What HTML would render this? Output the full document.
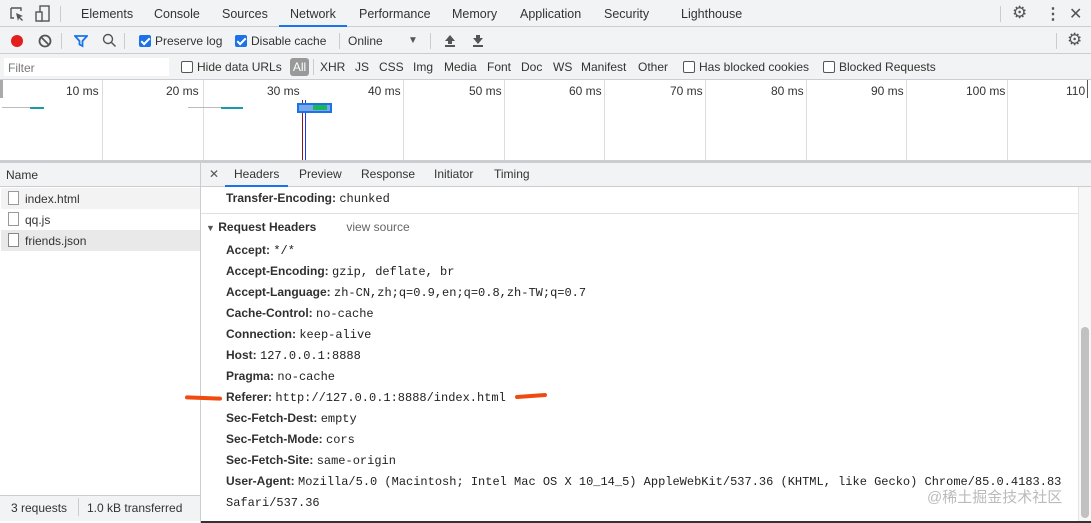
<!DOCTYPE html>
<html><head><style>
*{margin:0;padding:0;box-sizing:border-box}
body{width:1091px;height:523px;overflow:hidden;background:#fff;font-family:"Liberation Sans",sans-serif;font-size:12px;color:#333;position:relative}
.a{position:absolute;white-space:nowrap}
.mono{font-family:"Liberation Mono",monospace;font-size:12px;color:#222}
b{font-weight:bold;color:#303030}
.cb{display:inline-block;width:12px;height:12px;border-radius:2px;vertical-align:-2px;margin-right:4px}
.on{background:#1a73e8;position:relative}
.on:after{content:"";position:absolute;left:4px;top:1px;width:3px;height:7px;border:solid #fff;border-width:0 2px 2px 0;transform:rotate(45deg)}
.off{border:1px solid #555;background:#fff}
.vl{position:absolute;width:1px;background:#ccc}
.rows div{height:21px;line-height:21px}
</style></head><body>
<!-- tab bar -->
<div class="a" style="left:0;top:0;width:1091px;height:27px;background:#f1f3f4;border-bottom:1px solid #cbcdd1"></div>
<svg class="a" style="left:9px;top:6px" width="16" height="16"><path d="M2 2h10v3M2 2v10h3" fill="none" stroke="#555" stroke-width="1.4"/><path d="M7 7l7 3-3 1 3 3-1 1-3-3-1 3z" fill="#555"/></svg>
<svg class="a" style="left:35px;top:5px" width="16" height="18"><rect x="5" y="1" width="9" height="15" fill="none" stroke="#555" stroke-width="1.4"/><rect x="1" y="7" width="6" height="9" fill="#f1f3f4" stroke="#555" stroke-width="1.4"/></svg>
<div class="vl" style="left:60px;top:6px;height:16px"></div>
<div class="a" style="left:81px;top:7px;font-size:12.5px">Elements</div>
<div class="a" style="left:154px;top:7px;font-size:12.5px">Console</div>
<div class="a" style="left:222px;top:7px;font-size:12.5px">Sources</div>
<div class="a" style="left:290px;top:7px;font-size:12.5px">Network</div>
<div class="a" style="left:279px;top:25px;width:68px;height:2px;background:#1a73e8"></div>
<div class="a" style="left:359px;top:7px;font-size:12.5px">Performance</div>
<div class="a" style="left:452px;top:7px;font-size:12.5px">Memory</div>
<div class="a" style="left:520px;top:7px;font-size:12.5px">Application</div>
<div class="a" style="left:604px;top:7px;font-size:12.5px">Security</div>
<div class="a" style="left:681px;top:7px;font-size:12.5px">Lighthouse</div>
<div class="vl" style="left:1000px;top:6px;height:16px"></div>
<div class="a" style="left:1012px;top:3px;font-size:17px;color:#555">⚙</div>
<div class="a" style="left:1045px;top:4px;font-size:16px;color:#555;font-weight:bold">⋮</div>
<div class="a" style="left:1069px;top:4px;font-size:16px;color:#555">✕</div>
<!-- toolbar -->
<div class="a" style="left:0;top:27px;width:1091px;height:27px;background:#f1f3f4;border-bottom:1px solid #cbcdd1"></div>
<div class="a" style="left:11px;top:35px;width:12px;height:12px;border-radius:50%;background:#e41d1d"></div>
<svg class="a" style="left:38px;top:34px" width="14" height="14"><circle cx="7" cy="7" r="5.5" fill="none" stroke="#555" stroke-width="1.8"/><path d="M3 3l8 8" stroke="#555" stroke-width="1.8"/></svg>
<div class="vl" style="left:61px;top:33px;height:16px"></div>
<svg class="a" style="left:74px;top:34px" width="14" height="14"><path d="M1 2h12l-4.5 5v5l-3-1.5V7z" fill="none" stroke="#1a73e8" stroke-width="1.8"/></svg>
<svg class="a" style="left:102px;top:33px" width="15" height="15"><circle cx="6" cy="6" r="4.5" fill="none" stroke="#555" stroke-width="1.4"/><path d="M9.5 9.5l4 4" stroke="#555" stroke-width="1.5"/></svg>
<div class="vl" style="left:124px;top:33px;height:16px"></div>
<div class="a" style="left:139px;top:34px"><span class="cb on"></span>Preserve log</div>
<div class="a" style="left:235px;top:34px"><span class="cb on"></span>Disable cache</div>
<div class="vl" style="left:339px;top:33px;height:16px"></div>
<div class="a" style="left:348px;top:34px">Online</div>
<div class="a" style="left:408px;top:35px;font-size:10px;color:#555">▼</div>
<div class="vl" style="left:430px;top:33px;height:16px"></div>
<svg class="a" style="left:444px;top:34px" width="12" height="13"><path d="M6 1L1 7h3v3h4V7h3z" fill="#555"/><rect x="1" y="11" width="10" height="2" fill="#555"/></svg>
<svg class="a" style="left:472px;top:34px" width="12" height="13"><path d="M6 10L1 4h3V1h4v3h3z" fill="#555"/><rect x="1" y="11" width="10" height="2" fill="#555"/></svg>
<div class="vl" style="left:1056px;top:33px;height:16px"></div>
<div class="a" style="left:1067px;top:30px;font-size:17px;color:#555">⚙</div>
<!-- filter -->
<div class="a" style="left:0;top:54px;width:1091px;height:26px;background:#f1f3f4;border-bottom:1px solid #cbcdd1"></div>
<div class="a" style="left:4px;top:58px;width:165px;height:18px;background:#fff"></div>
<div class="a" style="left:8px;top:61px;color:#777">Filter</div>
<div class="a" style="left:181px;top:60px"><span class="cb off"></span>Hide data URLs</div>
<div class="a" style="left:290px;top:58px;width:19px;height:18px;background:#999;border-radius:3px;color:#fff;text-align:center;line-height:18px">All</div>
<div class="vl" style="left:313px;top:59px;height:16px"></div>
<div class="a" style="left:320px;top:60px">XHR</div>
<div class="a" style="left:355px;top:60px">JS</div>
<div class="a" style="left:379px;top:60px">CSS</div>
<div class="a" style="left:413px;top:60px">Img</div>
<div class="a" style="left:444px;top:60px">Media</div>
<div class="a" style="left:487px;top:60px">Font</div>
<div class="a" style="left:521px;top:60px">Doc</div>
<div class="a" style="left:553px;top:60px">WS</div>
<div class="a" style="left:581px;top:60px">Manifest</div>
<div class="a" style="left:638px;top:60px">Other</div>
<div class="a" style="left:683px;top:60px"><span class="cb off"></span>Has blocked cookies</div>
<div class="a" style="left:823px;top:60px"><span class="cb off"></span>Blocked Requests</div>
<!-- timeline -->
<div class="a" style="left:0;top:80px;width:3px;height:18px;background:#aaa"></div>
<div class="vl" style="left:102px;top:80px;height:80px;background:#ddd"></div>
<div class="vl" style="left:203px;top:80px;height:80px;background:#ddd"></div>
<div class="vl" style="left:403px;top:80px;height:80px;background:#ddd"></div>
<div class="vl" style="left:504px;top:80px;height:80px;background:#ddd"></div>
<div class="vl" style="left:604px;top:80px;height:80px;background:#ddd"></div>
<div class="vl" style="left:705px;top:80px;height:80px;background:#ddd"></div>
<div class="vl" style="left:806px;top:80px;height:80px;background:#ddd"></div>
<div class="vl" style="left:906px;top:80px;height:80px;background:#ddd"></div>
<div class="vl" style="left:1007px;top:80px;height:80px;background:#ddd"></div>
<div class="vl" style="left:1087px;top:80px;height:18px;background:#555"></div>
<div class="a" style="left:66px;top:84px">10 ms</div>
<div class="a" style="left:166px;top:84px">20 ms</div>
<div class="a" style="left:267px;top:84px">30 ms</div>
<div class="a" style="left:368px;top:84px">40 ms</div>
<div class="a" style="left:469px;top:84px">50 ms</div>
<div class="a" style="left:569px;top:84px">60 ms</div>
<div class="a" style="left:670px;top:84px">70 ms</div>
<div class="a" style="left:771px;top:84px">80 ms</div>
<div class="a" style="left:871px;top:84px">90 ms</div>
<div class="a" style="left:966px;top:84px">100 ms</div>
<div class="a" style="left:1066px;top:84px">110</div>
<div class="a" style="left:2px;top:107px;width:28px;height:1px;background:#bbb"></div>
<div class="a" style="left:30px;top:107px;width:14px;height:2px;background:#1a9ca8"></div>
<div class="a" style="left:188px;top:107px;width:33px;height:1px;background:#bbb"></div>
<div class="a" style="left:221px;top:107px;width:22px;height:2px;background:#1a9ca8"></div>
<div class="a" style="left:302px;top:100px;width:1px;height:60px;background:#8b1a1a"></div>
<div class="a" style="left:305px;top:100px;width:1px;height:60px;background:#1a3ae8"></div>
<div class="a" style="left:297px;top:103px;width:35px;height:10px;background:#7aa9e8;border:2px solid #1a73e8"></div>
<div class="a" style="left:313px;top:105px;width:14px;height:5px;background:#1bb55c"></div>
<!-- bottom -->
<div class="a" style="left:0;top:160px;width:1091px;height:3px;background:#cbcdd1"></div>
<div class="a" style="left:0;top:163px;width:200px;height:24px;background:#f1f3f4;border-bottom:1px solid #cbcdd1"></div>
<div class="a" style="left:6px;top:168px">Name</div>
<div class="a" style="left:200px;top:163px;width:1px;height:360px;background:#cbcdd1"></div>
<div class="a" style="left:1px;top:188px;width:199px;height:21px;background:#f3f3f3"></div>
<div class="a" style="left:1px;top:230px;width:199px;height:21px;background:#e9e9e9"></div>
<div class="a" style="left:8px;top:191px;width:11px;height:14px;border:1px solid #999;background:#fff"></div>
<div class="a" style="left:8px;top:212px;width:11px;height:14px;border:1px solid #999;background:#fff"></div>
<div class="a" style="left:8px;top:233px;width:11px;height:14px;border:1px solid #888;background:#fff"></div>
<div class="a" style="left:25px;top:192px">index.html</div>
<div class="a" style="left:25px;top:213px">qq.js</div>
<div class="a" style="left:25px;top:234px">friends.json</div>
<div class="a" style="left:0;top:495px;width:200px;height:26px;background:#f1f3f4;border-top:1px solid #cbcdd1"></div>
<div class="a" style="left:11px;top:501px">3 requests</div>
<div class="vl" style="left:78px;top:498px;height:18px"></div>
<div class="a" style="left:87px;top:501px">1.0 kB transferred</div>
<!-- detail tabs -->
<div class="a" style="left:201px;top:163px;width:890px;height:24px;background:#f1f3f4;border-bottom:1px solid #cbcdd1"></div>
<div class="a" style="left:209px;top:167px;color:#555">✕</div>
<div class="a" style="left:234px;top:167px">Headers</div>
<div class="a" style="left:225px;top:185px;width:63px;height:2px;background:#1a73e8"></div>
<div class="a" style="left:299px;top:167px">Preview</div>
<div class="a" style="left:361px;top:167px">Response</div>
<div class="a" style="left:434px;top:167px">Initiator</div>
<div class="a" style="left:494px;top:167px">Timing</div>
<div class="a" style="left:226px;top:191px"><b>Transfer-Encoding:</b> <span class="mono">chunked</span></div>
<div class="a" style="left:201px;top:213px;width:877px;height:1px;background:#e0e0e0"></div>
<div class="a" style="left:206px;top:220px"><span style="font-size:9px;color:#555">▼</span> <b>Request Headers</b><span style="color:#666;margin-left:30px">view source</span></div>
<div class="a rows" style="left:226px;top:240px">
<div><b>Accept:</b> <span class="mono">*/*</span></div>
<div><b>Accept-Encoding:</b> <span class="mono">gzip, deflate, br</span></div>
<div><b>Accept-Language:</b> <span class="mono">zh-CN,zh;q=0.9,en;q=0.8,zh-TW;q=0.7</span></div>
<div><b>Cache-Control:</b> <span class="mono">no-cache</span></div>
<div><b>Connection:</b> <span class="mono">keep-alive</span></div>
<div><b>Host:</b> <span class="mono">127.0.0.1:8888</span></div>
<div><b>Pragma:</b> <span class="mono">no-cache</span></div>
<div><b>Referer:</b> <span class="mono">http://127.0.0.1:8888/index.html</span></div>
<div><b>Sec-Fetch-Dest:</b> <span class="mono">empty</span></div>
<div><b>Sec-Fetch-Mode:</b> <span class="mono">cors</span></div>
<div><b>Sec-Fetch-Site:</b> <span class="mono">same-origin</span></div>
<div><b>User-Agent:</b> <span class="mono">Mozilla/5.0 (Macintosh; Intel Mac OS X 10_14_5) AppleWebKit/537.36 (KHTML, like Gecko) Chrome/85.0.4183.83</span></div>
<div><span class="mono">Safari/537.36</span></div>
</div>
<div class="a" style="left:185px;top:396px;width:37px;height:4px;border-radius:2px;background:#f04a10;transform:rotate(2deg)"></div>
<div class="a" style="left:515px;top:394px;width:32px;height:4px;border-radius:2px;background:#f04a10;transform:rotate(-4deg)"></div>
<div class="a" style="left:927px;top:486px;font-family:'Liberation Sans','Noto Sans CJK SC',sans-serif;font-size:15px;color:#bbb">@稀土掘金技术社区</div>
<div class="a" style="left:1078px;top:187px;width:13px;height:336px;background:#f7f7f7;border-left:1px solid #e5e5e5"></div>
<div class="a" style="left:1081px;top:327px;width:8px;height:191px;border-radius:4px;background:#c1c1c1"></div>
<div class="a" style="left:201px;top:521px;width:890px;height:2px;background:#333"></div>
</body></html>
